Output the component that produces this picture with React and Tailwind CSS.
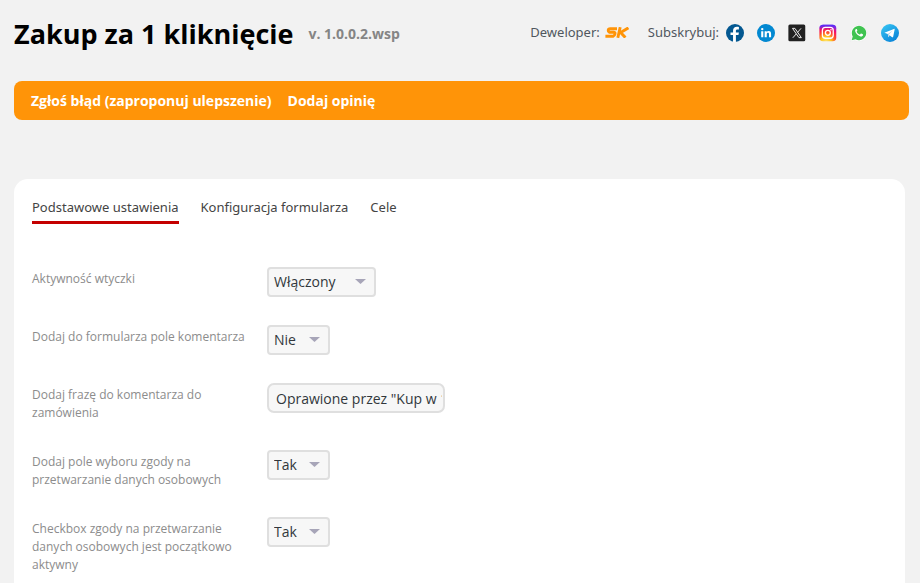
import React from "react";

const iconLinks = [
  {
    name: "Facebook",
    art: (
      <>
        <circle cx="12" cy="12" r="12" fill="#045891" />
        <path
          d="M13.2 24v-9.2h3.4l.6-3.6h-4V9.1c0-1.1.6-1.9 2-1.9h2V4c-.6-.1-1.600-.2-2.600-.2-3.200 0-5.200 1.800-5.200 5v2.400H6v3.600h3.400V24z"
          fill="#fff"
        />
      </>
    ),
  },
  {
    name: "LinkedIn",
    art: (
      <>
        <circle cx="12" cy="12" r="12" fill="#0288d1" />
        <circle cx="7" cy="6.800" r="1.600" fill="#fff" />
        <path
          d="M5.600 9.600h2.800V17.500H5.600zM10.200 9.600h2.700v1.200c.5-.8 1.400-1.400 2.700-1.400 2.400 0 3.200 1.600 3.200 3.800v4.300H16v-4c0-1.100-.3-1.900-1.400-1.900-1.200 0-1.600.9-1.600 1.900v4h-2.800z"
          fill="#fff"
        />
      </>
    ),
  },
  {
    name: "X",
    art: (
      <>
        <rect x="0.500" y="0.500" width="22.500" height="22.500" rx="2" fill="#212121" />
        <path
          d="M6 5.800h3.200L17.800 18.200h-3.200zM17.400 5.800l-4.800 5.500M11 13.200l-4.600 5.200"
          fill="none"
          stroke="#fff"
          strokeWidth="1.200"
        />
      </>
    ),
  },
  {
    name: "Instagram",
    art: (
      <>
        <defs>
          <radialGradient id="ig-warm" cx="0.4" cy="1" r="1">
            <stop offset="0" stopColor="#ffe36a" />
            <stop offset="0.3" stopColor="#ffc51f" />
            <stop offset="0.55" stopColor="#ff4d2e" />
            <stop offset="0.8" stopColor="#f00a6e" />
            <stop offset="1" stopColor="#8a2be2" />
          </radialGradient>
          <linearGradient id="ig-cool" x1="0" y1="0" x2="0" y2="1">
            <stop offset="0" stopColor="#4b2fff" />
            <stop offset="0.3" stopColor="#7b20e0" stopOpacity="0" />
          </linearGradient>
        </defs>
        <rect x="0.500" y="1" width="22.500" height="22" rx="5" fill="url(#ig-warm)" />
        <rect x="0.500" y="1" width="22.500" height="22" rx="5" fill="url(#ig-cool)" />
        <rect x="4.500" y="4.500" width="14.500" height="14.500" rx="4" fill="none" stroke="#fff" strokeWidth="1.700" />
        <circle cx="11.800" cy="11.800" r="3.300" fill="none" stroke="#fff" strokeWidth="1.800" />
        <circle cx="16" cy="7.800" r="1" fill="#fff" />
      </>
    ),
  },
  {
    name: "WhatsApp",
    art: (
      <>
        <path d="M0.500 23.500l1.500-6A11 11 0 1 1 6.400 22z" fill="#fff" stroke="#e9e9e9" strokeWidth="0.600" />
        <path d="M2.200 21.800l1.400-5.200A9.600 9.600 0 1 1 7.400 20.400z" fill="#40c351" />
        <path
          d="M9.200 7c-.3-.6-.9-.6-1.300-.2-1.300 1.200-1.300 2.900-.3 4.500 1.300 2.200 3.200 4 5.700 5 1.900.7 3.800.1 4.100-1.700.1-.5 0-.8-.4-1l-1.900-.9c-.4-.2-.7-.1-.9.200l-.8 1c-.2.200-.4.300-.8.100-1.700-.8-2.900-1.900-3.700-3.400-.1-.3-.1-.5.1-.7l.7-.9c.1-.2.100-.4 0-.6z"
          fill="#fff"
        />
      </>
    ),
  },
  {
    name: "Telegram",
    art: (
      <>
        <defs>
          <linearGradient id="tg-blue" x1="0.2" y1="0.1" x2="0.8" y2="0.9">
            <stop offset="0" stopColor="#33bef0" />
            <stop offset="1" stopColor="#0a85d9" />
          </linearGradient>
        </defs>
        <circle cx="12" cy="12" r="12" fill="url(#tg-blue)" />
        <path d="M4.500 11.700L17.200 6.500c.7-.3 1.100.1 1 .8l-2 9.800c-.2.700-.7.900-1.300.5l-5.800-4.300z" fill="#fff" />
        <path d="M9.100 13.300l.6 4.200 2.100-2.200z" fill="#d2e4f0" />
        <path d="M9.100 13.300l6.500-4.500-5 5.300-.9 3.400z" fill="#b5cfe4" />
      </>
    ),
  },
];

const tabs = ["Podstawowe ustawienia", "Konfiguracja formularza", "Cele"];

function SelectBox({ id, value, options, wide }) {
  return (
    <div className={`relative ${wide ? "w-[109px]" : "w-[63px]"}`}>
      <select
        id={id}
        defaultValue={value}
        className="block h-[30px] w-full appearance-none rounded-[4px] border-2 border-[#dfdfdf] bg-[#f7f7f7] pl-[5px] text-sm text-[#32373c]"
      >
        {options.map((option) => (
          <option key={option}>{option}</option>
        ))}
      </select>
      <svg
        viewBox="0 0 10 5"
        className="pointer-events-none absolute top-3 right-[10px] h-[5px] w-[11px]"
        preserveAspectRatio="none"
        aria-hidden="true"
      >
        <path d="M0 0h10L5 5z" fill="#a7a5b8" />
      </svg>
    </div>
  );
}

function Row({ id, label, children }) {
  return (
    <div className="flex items-start">
      <label htmlFor={id} className="w-[235px] shrink-0 pt-[3px] pr-5 text-xs leading-[18px] text-[#8c8c8c]">
        {label}
      </label>
      {children}
    </div>
  );
}

function SkLogo() {
  return (
    <svg viewBox="0 0 24 11" className="h-[11px] w-6" role="img" aria-label="SK">
      <g fill="none" stroke="#ff9408" strokeWidth="2.900">
        <path d="M12 1.700H5.200Q3.400 1.700 3.200 3.200T4.500 5.300H8.600Q10.400 5.300 10 7T8 9.300H.4" />
        <path d="M15.200 .2L12.800 10.800M23.400 .8L15.600 5.500L20.400 10.600" />
      </g>
    </svg>
  );
}

export default function App() {
  return (
    <div className="flex min-h-screen flex-col bg-[#f2f2f2] pl-[14px] font-['Open_Sans','Noto_Sans',sans-serif]">
      <header className="flex h-[81px] items-start justify-between pr-[21px]">
        <div className="flex items-center gap-[15px] pt-4">
          <h1 className="text-[27px] leading-9 font-bold text-black">Zakup za 1 kliknięcie</h1>
          <span className="text-sm font-bold text-[#858585]">v. 1.0.0.2.wsp</span>
        </div>
        <div className="flex items-center pt-[23px] font-['Noto_Sans',sans-serif] text-[13px] text-[#50575e]">
          <span>Deweloper:</span>
          <a href="#developer" className="mr-[19px] ml-[5px]">
            <SkLogo />
          </a>
          <span>Subskrybuj:</span>
          <nav className="ml-[7px] flex gap-[13px]">
            {iconLinks.map((link) => (
              <a key={link.name} href={`#${link.name}`} aria-label={link.name}>
                <svg viewBox="0 0 24 24" className="size-[18px]" aria-hidden="true">
                  {link.art}
                </svg>
              </a>
            ))}
          </nav>
        </div>
      </header>

      <nav className="mr-[11px] flex h-[39px] items-center gap-4 rounded-[8px] bg-[#ff9408] px-[17px] text-sm font-bold text-white">
        <a href="#bug">Zgłoś błąd (zaproponuj ulepszenie)</a>
        <a href="#review">Dodaj opinię</a>
      </nav>

      <main className="mt-[59px] mr-[15px] flex-1 rounded-t-[14px] bg-white px-[18px]">
        <div className="flex gap-[22px] pt-[18px] font-['Noto_Sans',sans-serif] text-[13px] leading-5 text-[#444]">
          {tabs.map((tab, index) => (
            <button
              key={tab}
              type="button"
              className={`border-b-[3px] pb-1 ${index === 0 ? "border-[#c40000]" : "border-transparent"}`}
            >
              {tab}
            </button>
          ))}
        </div>

        <form className="flex flex-col gap-7 pt-[43px]">
          <Row id="active" label="Aktywność wtyczki">
            <SelectBox id="active" value="Włączony" options={["Włączony", "Wyłączony"]} wide />
          </Row>
          <Row id="comment" label="Dodaj do formularza pole komentarza">
            <SelectBox id="comment" value="Nie" options={["Tak", "Nie"]} />
          </Row>
          <Row id="phrase" label="Dodaj frazę do komentarza do zamówienia">
            <input
              id="phrase"
              type="text"
              defaultValue={'Oprawione przez "Kup w 1 kliknięcie"'}
              className="h-[30px] w-[178px] rounded-[7px] border-2 border-[#dfdfdf] bg-[#f7f7f7] pr-px pl-[7px] text-sm text-[#32373c]"
            />
          </Row>
          <Row id="consent" label="Dodaj pole wyboru zgody na przetwarzanie danych osobowych">
            <SelectBox id="consent" value="Tak" options={["Tak", "Nie"]} />
          </Row>
          <Row
            id="consent-default"
            label="Checkbox zgody na przetwarzanie danych osobowych jest początkowo aktywny"
          >
            <SelectBox id="consent-default" value="Tak" options={["Tak", "Nie"]} />
          </Row>
        </form>
      </main>
    </div>
  );
}
